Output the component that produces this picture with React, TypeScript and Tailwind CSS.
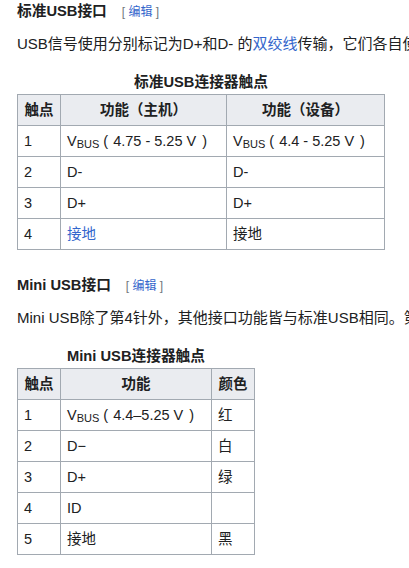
import React from 'react';

const font = { fontFamily: '"Liberation Sans", Arial, "Noto Sans CJK SC", sans-serif' };

interface Row {
  pin: string;
  cells: React.ReactNode[];
}

const Vbus: React.FC<{ range: string }> = ({ range }) => (
  <span>
    V<sub className="text-[11px] relative top-[2px] align-baseline leading-none">BUS</sub>
    <span className="ml-[4px] mr-[5px]">(</span>
    {range}
    <span className="ml-[6px]">)</span>
  </span>
);

const EditLink: React.FC = () => (
  <span className="ml-[15px] text-[12px] font-normal text-[#72777d]">
    [ <span className="text-[#3366cc]">编辑</span> ]
  </span>
);

const Th: React.FC<{ children: React.ReactNode; w: string }> = ({ children, w }) => (
  <th className={`${w} border border-[#a2a9b1] bg-[#eaecf0] h-[31px] px-[6px] py-0 text-center font-bold leading-[22px]`}>
    {children}
  </th>
);

const DataTable: React.FC<{ caption: string; heads: string[]; widths: string[]; rows: Row[] }> = ({
  caption,
  heads,
  widths,
  rows,
}) => (
  <table className="border-collapse text-[14.5px] text-[#202122]">
    <caption className="font-bold text-[14.7px] leading-[23px] h-[23px] mt-[16px]">{caption}</caption>
    <thead>
      <tr>
        {heads.map((h, i) => (
          <Th key={i} w={widths[i]}>
            {h}
          </Th>
        ))}
      </tr>
    </thead>
    <tbody>
      {rows.map((r) => (
        <tr key={r.pin}>
          <td className="border border-[#a2a9b1] h-[31px] px-[6px] py-0 leading-[22px]">{r.pin}</td>
          {r.cells.map((c, i) => (
            <td key={i} className="border border-[#a2a9b1] h-[31px] px-[6px] py-0 leading-[22px] whitespace-nowrap">
              {c}
            </td>
          ))}
        </tr>
      ))}
    </tbody>
  </table>
);

const App: React.FC = () => {
  const stdRows: Row[] = [
    { pin: '1', cells: [<Vbus range="4.75 - 5.25 V" />, <Vbus range="4.4 - 5.25 V" />] },
    { pin: '2', cells: ['D-', 'D-'] },
    { pin: '3', cells: ['D+', 'D+'] },
    { pin: '4', cells: [<span className="text-[#3366cc]">接地</span>, '接地'] },
  ];
  const miniRows: Row[] = [
    { pin: '1', cells: [<Vbus range="4.4–5.25 V" />, '红'] },
    { pin: '2', cells: ['D−', '白'] },
    { pin: '3', cells: ['D+', '绿'] },
    { pin: '4', cells: ['ID', ''] },
    { pin: '5', cells: ['接地', '黑'] },
  ];

  return (
    <div className="w-[409px] h-[568px] overflow-hidden bg-white text-[#202122] pl-[17px]" style={font}>
      <h3 className="text-[14.7px] font-bold leading-[22px] whitespace-nowrap">
        标准USB接口
        <EditLink />
      </h3>
      <p className="mt-[10px] text-[15px] leading-[22px] whitespace-nowrap">
        USB信号使用分别标记为D+和D- 的<span className="text-[#3366cc]">双绞线</span>传输，它们各自使用半双工的差分信号
      </p>
      <DataTable
        caption="标准USB连接器触点"
        heads={['触点', '功能（主机）', '功能（设备）']}
        widths={['w-[43px]', 'w-[166px]', 'w-[158px]']}
        rows={stdRows}
      />
      <h3 className="mt-[24px] text-[14.7px] font-bold leading-[22px] whitespace-nowrap">
        Mini USB接口
        <EditLink />
      </h3>
      <p className="mt-[10px] text-[15px] leading-[22px] whitespace-nowrap">
        Mini USB除了第4针外，其他接口功能皆与标准USB相同。第4针成为ID
      </p>
      <DataTable
        caption="Mini USB连接器触点"
        heads={['触点', '功能', '颜色']}
        widths={['w-[43px]', 'w-[151px]', 'w-[43px]']}
        rows={miniRows}
      />
    </div>
  );
};

export default App;
